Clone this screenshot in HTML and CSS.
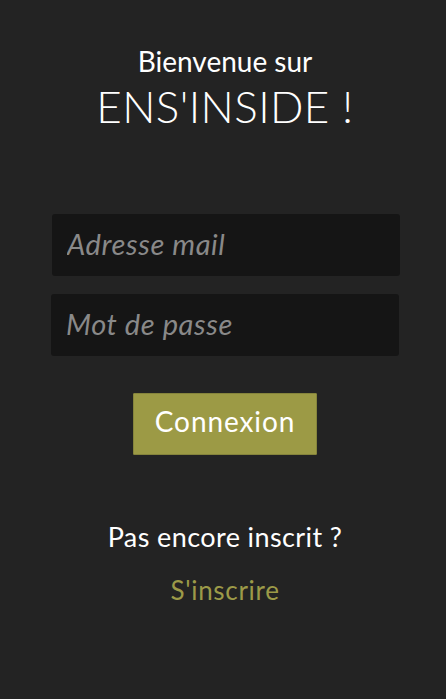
FILE: index.html
```html
<!DOCTYPE html>
<html lang="fr">
<head>
<meta charset="utf-8">
<title>ENS'INSIDE</title>
<link rel="stylesheet" href="styles.css">
</head>
<body>
<main class="page">
  <header class="welcome">
    <p class="welcome-sub">Bienvenue sur</p>
    <h1 class="welcome-title">ENS'INSIDE !</h1>
  </header>
  <form class="login">
    <input class="field field-mail" type="email" placeholder="Adresse mail">
    <input class="field field-pass" type="password" placeholder="Mot de passe">
    <button class="btn" type="button">Connexion</button>
  </form>
  <section class="signup">
    <p class="signup-text">Pas encore inscrit ?</p>
    <a class="signup-link" href="#">S'inscrire</a>
  </section>
</main>
</body>
</html>
```

FILE: styles.css
```css
html, body {
  margin: 0;
  padding: 0;
  background: #232323;
  height: 100%;
}
body {
  font-family: "Lato", "Noto Sans", sans-serif;
  color: #fff;
}
.page {
  display: flex;
  flex-direction: column;
  align-items: center;
  padding-top: 45px;
  padding-left: 4px;
}
.welcome {
  display: flex;
  flex-direction: column;
  align-items: center;
}
.welcome-sub {
  margin: 0;
  font-size: 28px;
  line-height: 32px;
  font-weight: 400;
}
.welcome-title {
  margin: 4px 0 0;
  font-size: 44px;
  line-height: 50px;
  font-weight: 300;
  letter-spacing: 0.4px;
}
.login {
  margin-top: 83px;
  display: flex;
  flex-direction: column;
  align-items: center;
  width: 100%;
}
.field {
  box-sizing: border-box;
  width: 348px;
  height: 62px;
  background: #151515;
  border: none;
  border-radius: 3px;
  padding: 0 15px 4px;
  font-family: inherit;
  font-size: 29px;
  font-style: italic;
  letter-spacing: 0.6px;
  color: #ddd;
  outline: none;
}
.field::placeholder {
  color: #898989;
}
.field-mail {
  margin-left: 2px;
}
.field-pass {
  margin-top: 18px;
}
.btn {
  margin-top: 37px;
  box-sizing: border-box;
  width: 184px;
  height: 62px;
  background: #9c9a45;
  border: 1px solid #85843c;
  border-radius: 1px;
  color: #fff;
  font-family: inherit;
  font-size: 28px;
  letter-spacing: 0.9px;
  padding: 0 0 6px;
}
.signup {
  margin-top: 66px;
  display: flex;
  flex-direction: column;
  align-items: center;
}
.signup-text {
  margin: 0;
  font-size: 27px;
  line-height: 32px;
  letter-spacing: 0.4px;
}
.signup-link {
  margin-top: 21px;
  font-size: 26px;
  line-height: 32px;
  letter-spacing: 0.7px;
  color: #9c9a48;
  text-decoration: none;
}
```
